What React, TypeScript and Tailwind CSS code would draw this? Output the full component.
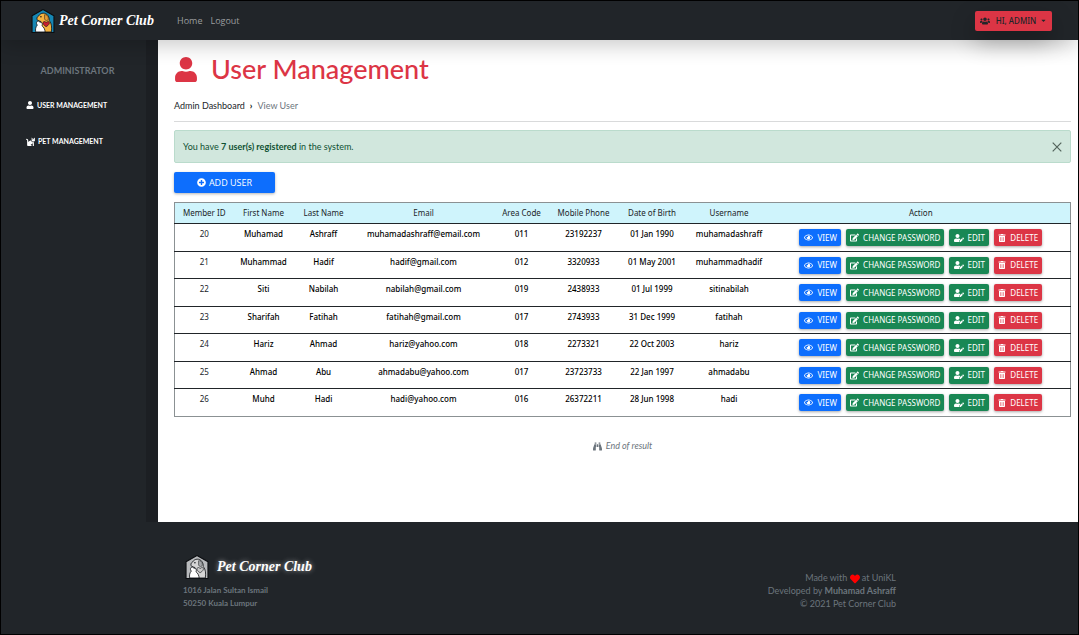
import React from "react";
import {
  FaBinoculars, FaCaretDown, FaCat, FaEdit, FaHeart, FaPlusCircle, FaRegEye, FaTrashAlt, FaUser, FaUserEdit, FaUsers,
} from "react-icons/fa";

const users = [
  ["20", "Muhamad", "Ashraff", "muhamadashraff@email.com", "011", "23192237", "01 Jan 1990", "muhamadashraff"],
  ["21", "Muhammad", "Hadif", "hadif@gmail.com", "012", "3320933", "01 May 2001", "muhammadhadif"],
  ["22", "Siti", "Nabilah", "nabilah@gmail.com", "019", "2438933", "01 Jul 1999", "sitinabilah"],
  ["23", "Sharifah", "Fatihah", "fatihah@gmail.com", "017", "2743933", "31 Dec 1999", "fatihah"],
  ["24", "Hariz", "Ahmad", "hariz@yahoo.com", "018", "2273321", "22 Oct 2003", "hariz"],
  ["25", "Ahmad", "Abu", "ahmadabu@yahoo.com", "017", "23723733", "22 Jan 1997", "ahmadabu"],
  ["26", "Muhd", "Hadi", "hadi@yahoo.com", "016", "26372211", "28 Jun 1998", "hadi"],
];

const columns = [
  { label: "Member ID", width: "w-[59px]" },
  { label: "First Name", width: "w-[60px]" },
  { label: "Last Name", width: "w-[60px]" },
  { label: "Email", width: "w-[140px]" },
  { label: "Area Code", width: "w-[56px]" },
  { label: "Mobile Phone", width: "w-[68px]" },
  { label: "Date of Birth", width: "w-[69px]" },
  { label: "Username", width: "w-[85px]" },
  { label: "Action", width: "" },
];

function PetMark({ mono = false }: { mono?: boolean }) {
  const house = mono ? "#b9bbbd" : "#1687b4";
  const dog = mono ? "#d5d5d5" : "#f4b23f";
  const ear = mono ? "#a5a7a9" : "#e39a35";
  const heart = mono ? "#c9c9c9" : "#c8202f";
  return (
    <svg viewBox="0 0 44 46" className="h-6 w-6 shrink-0" aria-hidden="true">
      <path d="M22 1 43 13V45H1V13Z" fill={house} stroke="#0b0d10" strokeWidth="2" strokeLinejoin="round" />
      <path d="M14 13C17 7 27 6 31 12c3 4 3 7 3 10 5 6 5 14 4 22H17l1-20-6-2c-3-3-2-7 2-9Z" fill={dog} stroke="#14171a" strokeWidth="1.6" />
      <path d="M25 11c5-1 8 4 7 9-2 4-6 2-7-1Z" fill={ear} stroke="#14171a" strokeWidth="1" />
      <path d="M8 44c-1-5 0-10 3-13-3-4-1-8 2-8l3 2c4 0 6 3 4 7 4 3 6 8 6 12Z" fill="#fff" stroke="#14171a" strokeWidth="1.6" />
      <path d="M28 34c-8-5-7-10-3-10 2 0 3 2 3 2s2-2 4-2c4 1 3 6-4 10Z" fill={heart} stroke="#14171a" strokeWidth="1.2" />
      <circle cx="18" cy="15" r="1.5" fill="#14171a" />
    </svg>
  );
}

const brandText = "font-['Brush_Script_MT','Liberation_Serif',cursive] text-[14px] leading-5 font-bold italic text-white whitespace-nowrap";
const action = "flex h-[17px] items-center rounded-[2px] text-[8px] leading-3 text-white shadow-[0_1px_3px_rgba(0,0,0,0.35)]";

function Actions() {
  return (
    <div className="flex justify-center gap-[5px]">
      <button className={`${action} w-[42px] justify-center gap-[5px] bg-[#0d6efd]`}><FaRegEye size={9} />VIEW</button>
      <button className={`${action} w-[98px] justify-center gap-1 bg-[#198754]`}><FaEdit size={9} />CHANGE PASSWORD</button>
      <button className={`${action} w-10 justify-center gap-1 bg-[#198754]`}><FaUserEdit size={10} />EDIT</button>
      <button className={`${action} w-12 justify-center gap-1 bg-[#dc3545]`}><FaTrashAlt size={8} />DELETE</button>
    </div>
  );
}

export default function App() {
  return (
    <div className="flex min-h-screen flex-col border border-black bg-[#212529] font-['Open_Sans','Noto_Sans',sans-serif] text-[9px]">
      <header className="relative z-10 flex h-[39px] items-center bg-[#212529] pr-[26px] pl-[30px] shadow-[0_6px_20px_rgba(0,0,0,0.2)]">
        <a href="#" className="flex w-[122px] items-center gap-1">
          <PetMark />
          <span className={brandText}>Pet Corner Club</span>
        </a>
        <nav className="ml-6 flex gap-2 leading-4 text-[#9b9d9f]">
          <a href="#">Home</a>
          <a href="#">Logout</a>
        </nav>
        <button className="ml-auto flex h-5 w-[77px] items-center justify-center rounded-[2px] bg-[#dc3545] font-['Noto_Sans',sans-serif] text-[8px] font-medium text-[#212529] shadow-[0_10px_24px_rgba(0,0,0,0.3)]">
          <FaUsers size={10} />
          <span className="mr-1 ml-[6px]">HI, ADMIN</span>
          <FaCaretDown size={7} />
        </button>
      </header>

      <div className="flex">
        <aside className="w-[157px] shrink-0 border-r-[12px] border-[#1c1f23] pt-[25px]">
          <h2 className="pl-2 text-center text-[9px] leading-3 font-bold text-[#6c757d] font-['Lato','Open_Sans',sans-serif]">ADMINISTRATOR</h2>
          <nav className="mt-[22px] flex flex-col gap-6 pl-[25px] font-['Lato','Open_Sans',sans-serif] text-[7px] leading-3 font-bold text-white">
            <a href="#" className="flex items-center gap-[3px]"><FaUser size={8} />USER MANAGEMENT</a>
            <a href="#" className="flex items-center gap-[3px]"><FaCat size={9} />PET MANAGEMENT</a>
          </nav>
        </aside>

        <main className="min-h-[482px] min-w-0 flex-1 bg-white pt-[13px] pr-[7px] pl-4 font-['Lato','Open_Sans',sans-serif]">
          <h1 className="flex h-8 items-center gap-[13px] text-[27px] leading-8 font-medium text-[#dc3545]">
            <FaUser size={25} className="w-6" />User Management
          </h1>
          <nav aria-label="Breadcrumb" className="mt-[15px] flex gap-[5px] leading-3">
            <a href="#" className="text-[#212529]">Admin Dashboard</a>
            <span className="font-bold text-black">›</span>
            <span className="text-[#6c757d]">View User</span>
          </nav>
          <hr className="mt-[9px] border-[#d9dadb]" />
          <div role="alert" className="mt-2 flex h-[33px] items-center justify-between rounded-[2px] border border-[#badbcc] bg-[#d1e7dd] px-2 text-[#0f5132]">
            <p>You have <b>7 user(s) registered</b> in the system.</p>
            <button aria-label="Close" className="text-[#52635b]">
              <svg viewBox="0 0 10 10" className="size-[10px]"><path d="M.7.7 9.3 9.3M9.3.7.7 9.3" stroke="currentColor" strokeWidth="1.2" /></svg>
            </button>
          </div>
          <button className="mt-[9px] flex h-[21px] w-[101px] items-center justify-center gap-[3px] rounded-[2px] bg-[#0d6efd] font-['Open_Sans','Noto_Sans',sans-serif] text-[9px] text-white shadow-[0_1px_3px_rgba(0,0,0,0.3)]">
            <FaPlusCircle size={9} />ADD USER
          </button>

          <table className="mt-[9px] w-full table-fixed border-collapse border border-[#8b9193] font-['Noto_Sans',sans-serif] text-[8px] leading-3 text-[#212529]">
            <thead>
              <tr className="h-[21px] bg-[#cff4fc]">
                {columns.map((c) => (
                  <th key={c.label} className={`${c.width} p-0 pb-px text-center font-normal whitespace-nowrap`}>{c.label}</th>
                ))}
              </tr>
            </thead>
            <tbody>
              {users.map((u) => (
                <tr key={u[0]} className="border-t border-[#212529] odd:h-7 even:h-[27px]">
                  {u.map((v, i) => (
                    <td key={i} className={i === 0 ? "p-0 pt-1 text-center align-top" : "p-0 pt-1 text-center align-top font-medium whitespace-nowrap text-black"}>{v}</td>
                  ))}
                  <td className="p-0 align-middle"><Actions /></td>
                </tr>
              ))}
            </tbody>
          </table>
          <p className="mt-[23px] flex items-center justify-center gap-1 leading-3 text-[#6c757d] italic"><FaBinoculars size={9} />End of result</p>
        </main>
      </div>

      <footer className="flex flex-1 justify-between px-[182px] pt-[33px] font-['Lato','Open_Sans',sans-serif] leading-[13px] text-[#6c757d]">
        <div>
          <div className="mb-[5px] flex items-center gap-2 pl-[2px]">
            <PetMark mono />
            <span className={`${brandText} [text-shadow:0_0_5px_rgba(255,255,255,0.6)]`}>Pet Corner Club</span>
          </div>
          <address className="text-[8px] leading-[13px] font-bold not-italic">1016 Jalan Sultan Ismail<br />50250 Kuala Lumpur</address>
        </div>
        <div className="pt-4 text-right">
          <p>Made with <FaHeart size={10} className="inline text-[#ff0000]" aria-label="love" /> at UniKL</p>
          <p>Developed by <b>Muhamad Ashraff</b></p>
          <p>© 2021 Pet Corner Club</p>
        </div>
      </footer>
    </div>
  );
}
